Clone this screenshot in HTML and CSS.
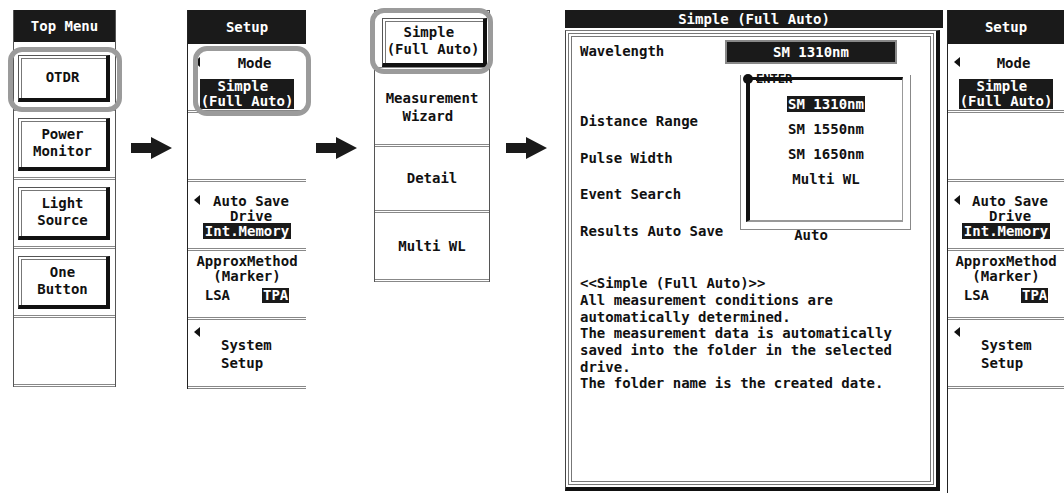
FILE: index.html
```html
<!DOCTYPE html>
<html lang="en">
<head>
<meta charset="UTF-8">
<title>Simple (Full Auto)</title>
<link rel="stylesheet" href="styles.css">
</head>
<body>
<div class="stage">
    <div class="menu top-menu">
        <div class="menu-head">Top Menu</div>
        <div class="menu-cell first">
            <div class="key">OTDR</div>
            <div class="ring ring-top"></div>
        </div>
        <div class="menu-cell"><div class="key">Power<br>Monitor</div></div>
        <div class="menu-cell"><div class="key">Light<br>Source</div></div>
        <div class="menu-cell"><div class="key">One<br>Button</div></div>
        <div class="menu-cell"></div>
    </div>

    <svg class="arrow arrow-1" width="41" height="22" viewBox="0 0 41 22"><path d="M0 6H20V0L41 11L20 22V16H0Z" fill="#1a1a1a"/></svg>

    <div class="menu setup">
        <div class="menu-head">Setup</div>
        <div class="menu-cell mode">
            <i class="tri"></i>
            <div class="mode-label">Mode</div>
            <div class="inv inv-block">  Simple
(Full Auto)</div>
            <div class="ring ring-mode"></div>
        </div>
        <div class="menu-cell"></div>
        <div class="menu-cell save">
            <i class="tri"></i>
            <div class="save-label">Auto Save</div>
            <div class="save-label">Drive</div>
            <div><span class="inv">Int.Memory</span></div>
        </div>
        <div class="menu-cell approx">
            <div>ApproxMethod</div>
            <div>(Marker)</div>
            <div class="pair"><span>LSA</span><span class="inv">TPA</span></div>
        </div>
        <div class="menu-cell system">
            <i class="tri"></i>
            <div>System<br>Setup</div>
        </div>
    </div>

    <svg class="arrow arrow-2" width="41" height="22" viewBox="0 0 41 22"><path d="M0 6H20V0L41 11L20 22V16H0Z" fill="#1a1a1a"/></svg>

    <div class="menu options">
        <div class="menu-cell opt-1">
            <div class="key lines">  Simple
(Full Auto)</div>
            <div class="ring ring-opt"></div>
        </div>
        <div class="menu-cell opt-2"><div class="lines">Measurement
  Wizard</div></div>
        <div class="menu-cell opt-3">Detail</div>
        <div class="menu-cell opt-4">Multi WL</div>
    </div>

    <svg class="arrow arrow-3" width="41" height="22" viewBox="0 0 41 22"><path d="M0 6H20V0L41 11L20 22V16H0Z" fill="#1a1a1a"/></svg>

    <div class="screen">
        <div class="screen-title">Simple (Full Auto)</div>
        <div class="screen-body">
            <div class="screen-in">
                <div class="form">
                    <div class="label">Wavelength</div>
                    <div class="value"><span class="val-box">SM 1310nm</span></div>
                    <div class="label"></div>
                    <div class="value"></div>
                    <div class="label">Distance Range</div>
                    <div class="value"></div>
                    <div class="label">Pulse Width</div>
                    <div class="value"></div>
                    <div class="label">Event Search</div>
                    <div class="value"></div>
                    <div class="label">Results Auto Save</div>
                    <div class="value auto">Auto</div>
                </div>
                <div class="desc">
                    &lt;&lt;Simple (Full Auto)&gt;&gt;<br>
                    All measurement conditions are<br>
                    automatically determined.<br>
                    The measurement data is automatically<br>
                    saved into the folder in the selected<br>
                    drive.<br>
                    The folder name is the created date.
                </div>
                <div class="popup">
                    <div class="popup-in">
                        <div><span class="inv">SM 1310nm</span></div>
                        <div>SM 1550nm</div>
                        <div>SM 1650nm</div>
                        <div>Multi WL</div>
                    </div>
                    <div class="enter"><span class="dot"></span><span class="enter-text">ENTER</span></div>
                </div>
            </div>
        </div>
    </div>

    <div class="menu setup setup-right">
        <div class="menu-head">Setup</div>
        <div class="menu-cell mode">
            <i class="tri"></i>
            <div class="mode-label">Mode</div>
            <div class="inv inv-block">  Simple
(Full Auto)</div>
        </div>
        <div class="menu-cell"></div>
        <div class="menu-cell save">
            <i class="tri"></i>
            <div class="save-label">Auto Save</div>
            <div class="save-label">Drive</div>
            <div><span class="inv">Int.Memory</span></div>
        </div>
        <div class="menu-cell approx">
            <div>ApproxMethod</div>
            <div>(Marker)</div>
            <div class="pair"><span>LSA</span><span class="inv">TPA</span></div>
        </div>
        <div class="menu-cell system">
            <i class="tri"></i>
            <div>System<br>Setup</div>
        </div>
        <div class="menu-cell tail"></div>
    </div>
</div>
</body>
</html>
```

FILE: styles.css
```css
body{
    margin: 0;
    background: #fff;
    font-family: "DejaVu Sans Mono", "Liberation Mono", monospace;
    font-size: 14px;
    font-weight: bold;
    color: #111;
    overflow: hidden;
}
.stage{
    display: flex;
    align-items: flex-start;
    height: 493px;
    box-sizing: border-box;
    padding: 10px 0 0 13px;
    overflow: hidden;
}
.arrow{
    flex: none;
    margin-top: 127px;
}
.arrow-1{ margin-left: 15px; margin-right: 15px; }
.arrow-2{ margin-left: 10px; margin-right: 17px; }
.arrow-3{ margin-left: 16px; margin-right: 18px; }

/* soft key columns */
.menu{
    flex: none;
    box-sizing: border-box;
}
.menu-head{
    height: 32px;
    background: #1a1a1a;
    color: #fff;
    display: flex;
    align-items: center;
    justify-content: center;
}
.setup .menu-head{
    height: 34px;
}
.menu-cell{
    position: relative;
    height: 69px;
    box-sizing: border-box;
    border-bottom: 3px double #888;
    display: flex;
    flex-direction: column;
    align-items: center;
    justify-content: center;
    text-align: center;
    line-height: 17px;
}
.inv{
    background: #1a1a1a;
    color: #fff;
}
.key{
    display: flex;
    align-items: center;
    justify-content: center;
    border: 1px solid #555;
    border-right: 4px solid #111;
    border-bottom: 4px solid #111;
    box-shadow: inset 2px 2px 0 #fff, inset 3px 3px 0 #777;
}
.lines{
    white-space: pre;
    text-align: left;
}
.ring{
    position: absolute;
    box-sizing: border-box;
    border: 5px solid #9b9b9b;
    border-radius: 14px;
}
.tri{
    position: absolute;
    left: 6px;
    top: 13px;
    width: 0;
    height: 0;
    border-top: 5px solid transparent;
    border-bottom: 5px solid transparent;
    border-right: 6px solid #111;
}

/* Top Menu */
.top-menu{
    width: 103px;
    border-left: 1px solid #555;
    border-right: 1px solid #555;
}
.top-menu .menu-cell{
    align-items: stretch;
    padding: 7px 5px 6px 4px;
}
.top-menu .key{
    flex: 1;
}
.top-menu .first{
    padding-top: 13px;
    padding-bottom: 6px;
}
.ring-top{
    left: -6px;
    top: 5px;
    width: 114px;
    height: 65px;
}

/* Setup */
.setup{
    width: 119px;
    border-left: 1px solid #222;
}
.setup-right{
    width: 117px;
    margin-left: 4px;
}
.mode, .save, .approx{
    justify-content: flex-start;
    line-height: 15px;
}
.mode{
    padding-top: 12px;
}
.mode-label{
    padding-left: 15px;
}
.inv-block{
    margin-top: 8px;
    padding: 0 1px;
    line-height: 15px;
    white-space: pre;
    text-align: left;
}
.ring-mode{
    left: 5px;
    top: 2px;
    width: 118px;
    height: 70px;
}
.save{
    padding-top: 12px;
}
.save-label{
    padding-left: 8px;
}
.save .inv{
    padding: 0 2px;
}
.approx{
    padding-top: 3px;
}
.pair{
    display: flex;
    gap: 32px;
    margin-top: 4px;
}
.pair .inv{
    padding: 0 1px;
}
.system{
    justify-content: flex-start;
    align-items: flex-start;
    text-align: left;
    padding: 16px 0 0 33px;
    line-height: 18px;
}
.system .tri{
    top: 7px;
}
.tail{
    height: 110px;
    border-bottom: none;
}

/* option list */
.options{
    width: 116px;
    border: 1px solid #555;
    border-bottom: none;
}
.opt-1{
    height: 59px;
    justify-content: flex-start;
    align-items: stretch;
    padding: 7px 2px 0 7px;
}
.opt-1 .key{
    height: 50px;
    box-sizing: border-box;
    justify-content: center;
}
.ring-opt{
    left: -5px;
    top: -3px;
    width: 123px;
    height: 66px;
}
.opt-2{ height: 77px; line-height: 18px; }
.opt-3{ height: 66px; }
.opt-4{ height: 69px; }

/* measurement screen */
.screen{
    flex: none;
    width: 378px;
}
.screen-title{
    height: 18px;
    line-height: 18px;
    margin-bottom: 2px;
    background: #1a1a1a;
    color: #fff;
    text-align: center;
}
.screen-body{
    width: 375px;
    height: 461px;
    box-sizing: border-box;
    border-left: 1px solid #444;
    border-top: 1px solid #777;
    border-right: 4px solid #111;
    border-bottom: 4px solid #111;
    padding: 2px;
}
.screen-in{
    position: relative;
    height: 100%;
    box-sizing: border-box;
    border: 4px double #777;
    padding-left: 8px;
}
.form{
    display: grid;
    grid-template-columns: 145px 172px;
    grid-template-rows: 29px 37px repeat(4, 36.7px);
    align-items: center;
    line-height: 17px;
}
.label{
    white-space: nowrap;
}
.val-box{
    display: block;
    height: 24px;
    box-sizing: border-box;
    border: 2px solid #888;
    background: #1a1a1a;
    color: #fff;
    text-align: center;
    line-height: 20px;
}
.form .value:first-of-type{
    align-self: start;
    margin-top: 6px;
}
.auto{
    text-align: center;
    padding-top: 8px;
}
.desc{
    margin-top: 25.5px;
    line-height: 16.7px;
}
.popup{
    position: absolute;
    left: 168px;
    top: 38px;
    width: 171px;
    height: 155px;
    box-sizing: border-box;
    background: #fff;
    border: 1px solid #888;
    border-top: none;
    padding: 2px 7px 7px 5px;
}
.popup-in{
    height: 100%;
    box-sizing: border-box;
    border-left: 4px solid #111;
    border-top: 3px solid #111;
    border-right: 1px solid #999;
    border-bottom: 2px solid #999;
    display: flex;
    flex-direction: column;
    align-items: center;
    padding-top: 12px;
    line-height: 25px;
}
.popup-in .inv{
    padding: 0 1px;
}
.enter{
    position: absolute;
    left: 2px;
    top: -2px;
    display: flex;
    align-items: center;
    gap: 3px;
    font-size: 12px;
    line-height: 12px;
}
.dot{
    width: 10px;
    height: 10px;
    border-radius: 50%;
    background: #111;
}
.enter-text{
    text-decoration: line-through 3px #111;
}
```
